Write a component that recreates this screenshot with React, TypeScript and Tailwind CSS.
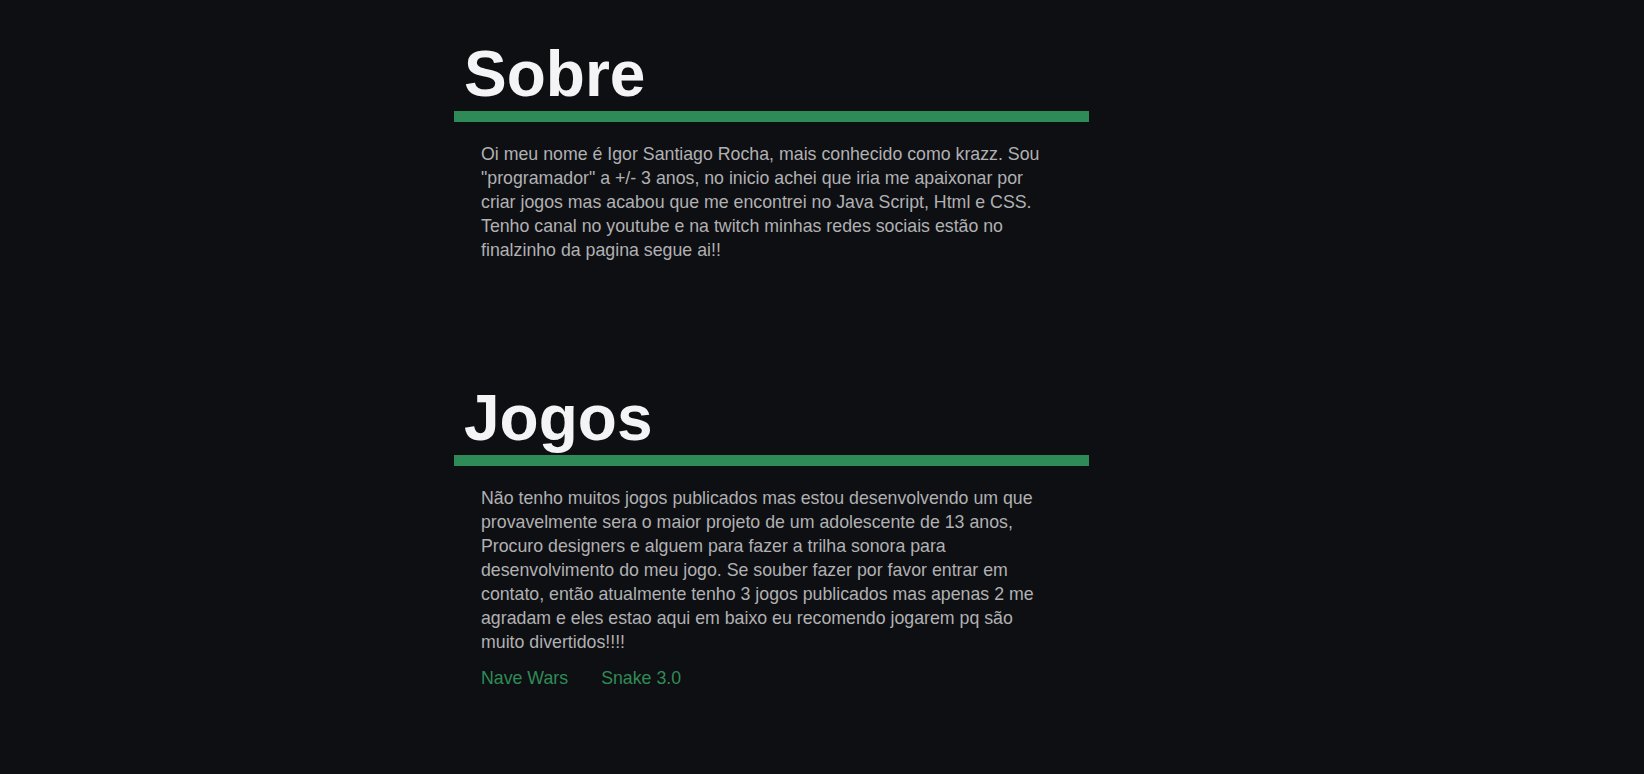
import React from "react";

type Section = {
  title: string;
  text: string;
  links?: string[];
};

const sections: Section[] = [
  {
    title: "Sobre",
    text: 'Oi meu nome é Igor Santiago Rocha, mais conhecido como krazz. Sou "programador" a +/- 3 anos, no inicio achei que iria me apaixonar por criar jogos mas acabou que me encontrei no Java Script, Html e CSS. Tenho canal no youtube e na twitch minhas redes sociais estão no finalzinho da pagina segue ai!!',
  },
  {
    title: "Jogos",
    text: "Não tenho muitos jogos publicados mas estou desenvolvendo um que provavelmente sera o maior projeto de um adolescente de 13 anos, Procuro designers e alguem para fazer a trilha sonora para desenvolvimento do meu jogo. Se souber fazer por favor entrar em contato, então atualmente tenho 3 jogos publicados mas apenas 2 me agradam e eles estao aqui em baixo eu recomendo jogarem pq são muito divertidos!!!!",
    links: ["Nave Wars", "Snake 3.0"],
  },
];

const App = () => {
  return (
    <main className="min-h-screen w-full bg-[#0e0f12] pt-[41px] font-['Liberation_Sans',Arial,sans-serif]">
      <div className="ml-[454px] flex w-[635px] flex-col gap-[123px]">
        {sections.map((section) => (
          <section key={section.title}>
            <h2 className="pb-[4px] pl-[10px] text-[64px] font-bold leading-[66px] text-[#f4f4f6]">
              {section.title}
            </h2>
            <div className="h-[11px] w-full bg-[#2e8b57]" />
            <p className="ml-[27px] mt-[20px] w-[570px] text-[17.75px] leading-[24px] text-[#b1b1b3]">
              {section.text}
            </p>
            {section.links && (
              <div className="ml-[27px] mt-[12px] flex gap-[33px] text-[17.75px] leading-[24px]">
                {section.links.map((link) => (
                  <a key={link} href="#" className="text-[#2e8b57]">
                    {link}
                  </a>
                ))}
              </div>
            )}
          </section>
        ))}
      </div>
    </main>
  );
};

export default App;
